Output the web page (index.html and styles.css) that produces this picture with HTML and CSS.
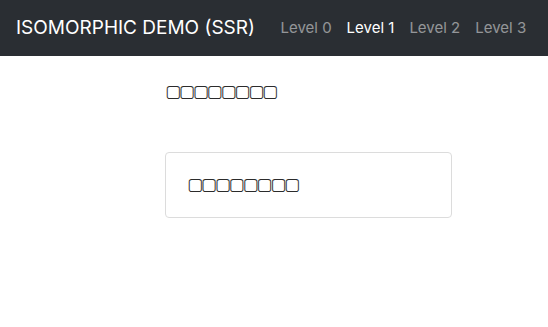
FILE: index.html
```html
<!DOCTYPE html>
<html lang="en">
<head>
  <meta charset="UTF-8" />
  <meta name="viewport" content="width=device-width, initial-scale=1.0" />
  <title>Isomorphic Demo (SSR)</title>
  <link rel="stylesheet" href="styles.css">
</head>
<body>
  <!-- Top Navbar -->
  <nav class="navbar">
    <a class="brand" href="#">ISOMORPHIC DEMO (SSR)</a>
    <ul class="nav-links">
      <li><a href="#">Level 0</a></li>
      <li><a class="active" href="#">Level 1</a></li>
      <li><a href="#">Level 2</a></li>
      <li><a href="#">Level 3</a></li>
    </ul>
  </nav>

  <!-- Page Content -->
  <main class="content">
    <p class="title">▢▢▢▢▢▢▢▢</p>
    <div class="card">
      <p class="card-text">▢▢▢▢▢▢▢▢</p>
    </div>
  </main>
</body>
</html>
```

FILE: styles.css
```css
/* Reset */
* {
  margin: 0;
  padding: 0;
  box-sizing: border-box;
}
body {
  font-family: Inter, "Liberation Sans", sans-serif;
  font-size: 16px;
  line-height: 24px;
  color: #212529;
  background: #fff;
}
a {
  text-decoration: none;
  white-space: nowrap;
}

/* Navbar */
.navbar {
  height: 56px;
  background-color: #2a2e33;
  display: flex;
  align-items: center;
  padding: 0 16px;
}
.brand {
  flex-shrink: 0;
  color: #fff;
  font-size: 19px;
  margin-right: 18px;
}
.nav-links {
  list-style: none;
  display: flex;
  flex-shrink: 0;
}
.nav-links a {
  display: block;
  padding: 8px 7.5px;
  font-size: 15px;
  color: rgba(255, 255, 255, 0.5);
}
.nav-links a.active {
  color: #fff;
}

/* Content */
.content {
  width: 287px;
  margin-left: 165px;
  padding-top: 23px;
}
.title {
  margin-bottom: 49px;
}
.title,
.card-text {
  font-family: "DejaVu Sans", sans-serif;
  font-size: 17px;
  letter-spacing: -2.2px;
  color: #2b2b2b;
}
.card {
  border: 1px solid #dcdcdc;
  border-radius: 4px;
  padding: 19px 21px 21px;
}
```
